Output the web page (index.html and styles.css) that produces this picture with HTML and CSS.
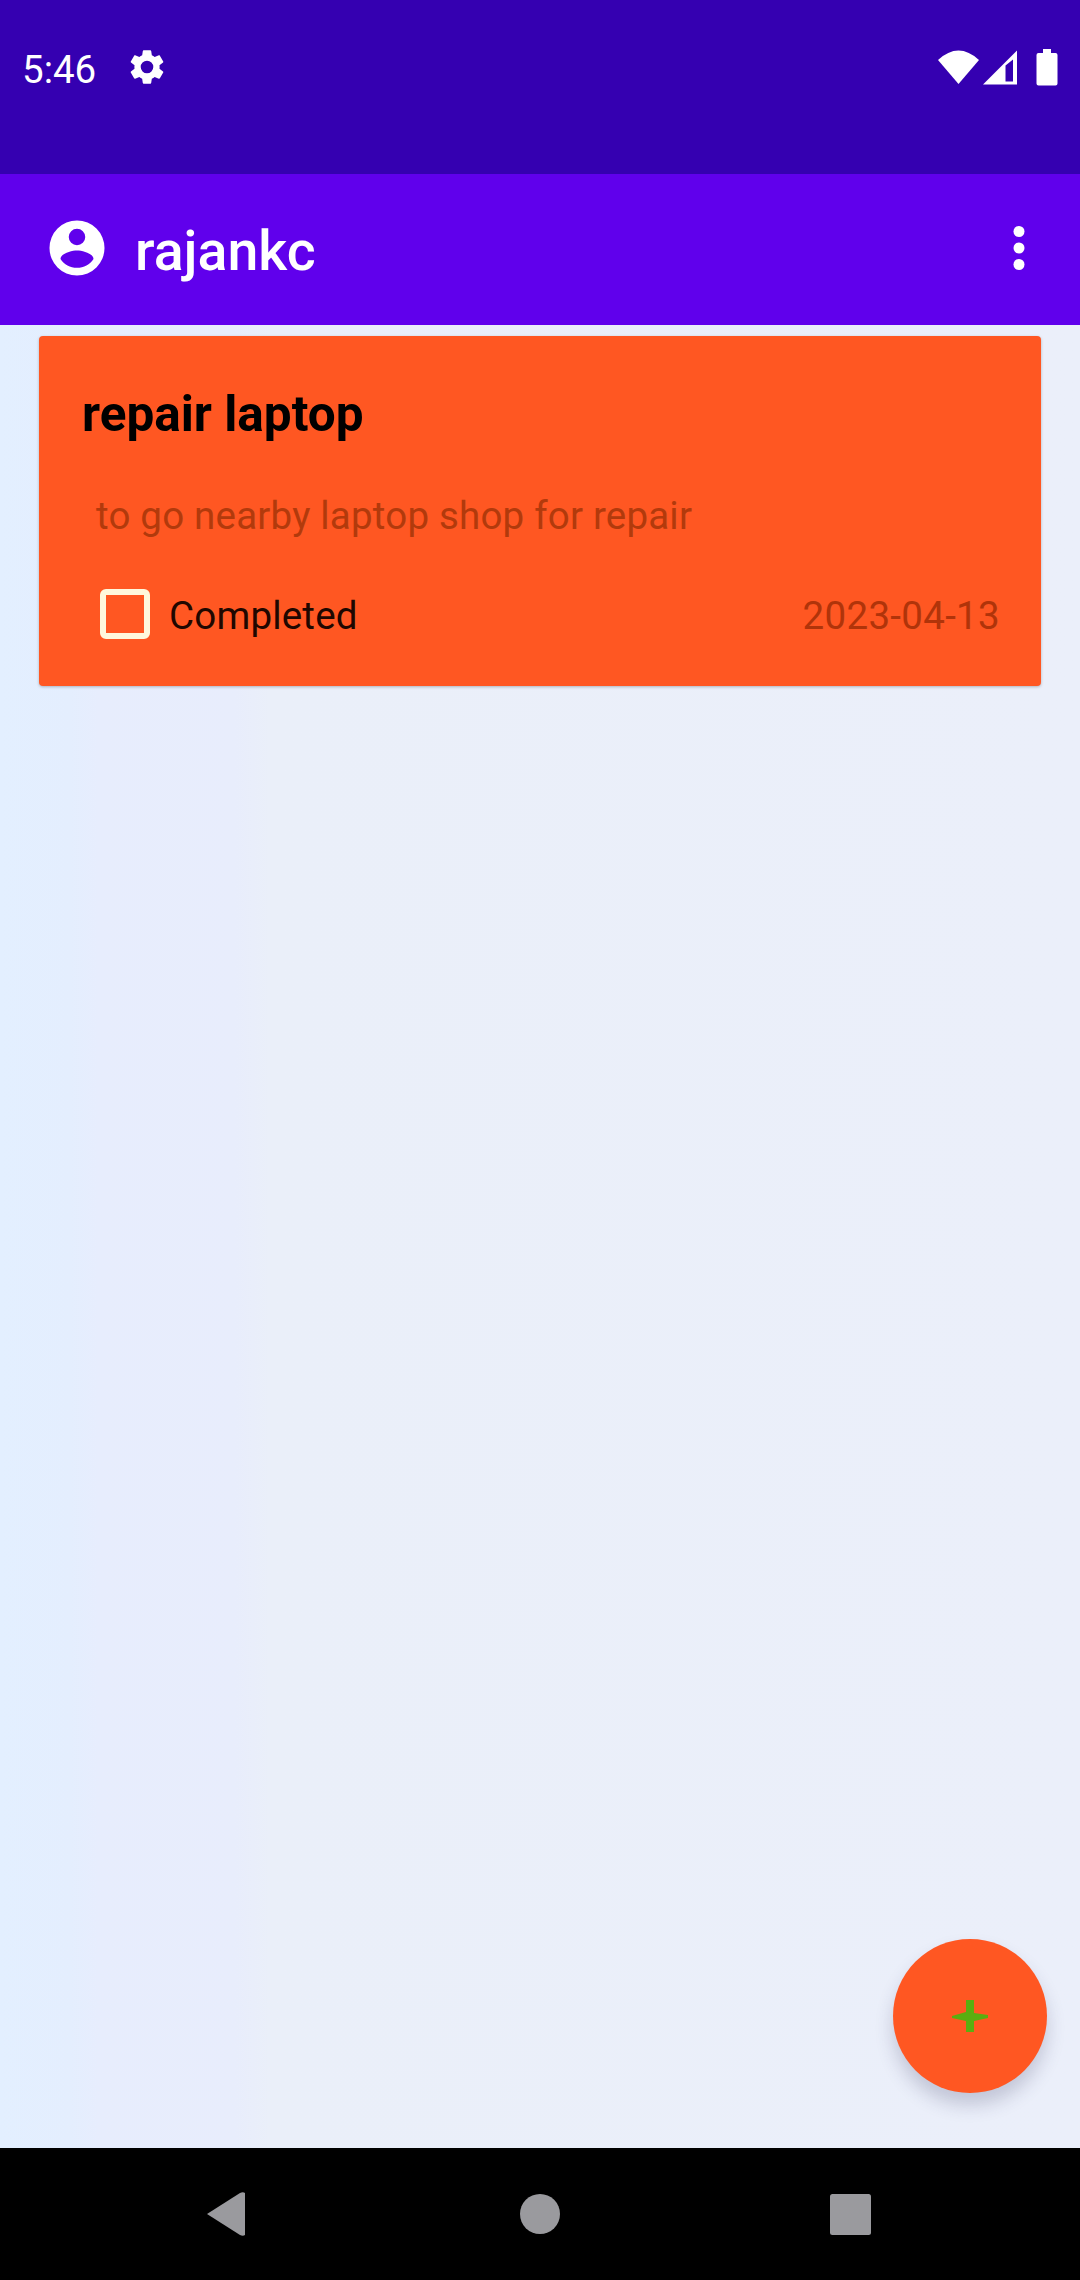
FILE: index.html
```html
<!DOCTYPE html>
<html lang="en">
<head>
<meta charset="utf-8">
<title>Tasks</title>
<link rel="stylesheet" href="styles.css">
</head>
<body>
<div class="screen">
  <header class="status">
    <span class="time">5:46</span>
    <svg class="gear" width="42" height="42" viewBox="0 0 24 24"><path d="M19.14 12.94c.04-.3.06-.61.06-.94 0-.32-.02-.64-.07-.94l2.03-1.58c.18-.14.23-.41.12-.61l-1.92-3.32c-.12-.22-.37-.29-.59-.22l-2.39.96c-.5-.38-1.03-.7-1.62-.94L14.400 2.810c-.04-.24-.24-.41-.48-.41h-3.840c-.24 0-.43.17-.47.41L9.250 5.350c-.59.24-1.130.57-1.620.94l-2.390-.96c-.22-.08-.47 0-.59.22L2.740 8.870c-.12.21-.08.47.12.61l2.030 1.580c-.05.3-.09.63-.09.94s.02.64.07.94l-2.030 1.580c-.18.14-.23.41-.12.61l1.920 3.320c.12.22.37.29.59.22l2.390-.96c.5.38 1.030.7 1.620.94l.36 2.540c.05.24.24.41.48.41h3.840c.24 0 .44-.17.47-.41l.36-2.540c.59-.24 1.130-.56 1.620-.94l2.390.96c.22.08.47 0 .59-.22l1.920-3.320c.12-.22.07-.47-.12-.61l-2.010-1.580zM12 15.600a3.600 3.600 0 1 1 0-7.200 3.600 3.600 0 0 1 0 7.200z"/></svg>
    <div class="signals">
      <svg width="41" height="34" viewBox="0 0 41 34"><path d="M0 10Q20.500-9 41 10L20.500 34z"/></svg>
      <svg width="34" height="35" viewBox="0 0 34 35"><path fill-rule="evenodd" d="M0 34.500L34 .5V34.500zM22.500 15.500V31.500h7.500V9.500z"/></svg>
      <svg class="battery" width="22" height="37" viewBox="0 0 22 37"><path d="M7 0h8v4h4.500q2 0 2 2v28.500q0 2-2 2H2.500q-2 0-2-2V6q0-2 2-2H7z"/></svg>
    </div>
  </header>
  <div class="appbar">
    <svg width="66" height="66" viewBox="0 0 24 24"><path fill-rule="evenodd" d="M12 2a10 10 0 1 0 0 20 10 10 0 0 0 0-20zm0 3a3 3 0 1 1 0 6 3 3 0 0 1 0-6zm0 14.200c-2.500 0-4.710-1.280-6-3.220.03-1.990 4-3.080 6-3.080s5.970 1.090 6 3.080c-1.290 1.940-3.500 3.220-6 3.220z"/></svg>
    <h1 class="user">rajankc</h1>
    <svg class="more" width="66" height="66" viewBox="0 0 24 24"><circle cx="12" cy="6" r="2"/><circle cx="12" cy="12" r="2"/><circle cx="12" cy="18" r="2"/></svg>
  </div>
  <main class="content">
    <article class="card">
      <h2 class="title">repair laptop</h2>
      <p class="desc">to go nearby laptop shop for repair</p>
      <div class="row">
        <span class="box"></span>
        <span class="label">Completed</span>
        <time class="date">2023-04-13</time>
      </div>
    </article>
    <button class="fab" aria-label="Add"><svg width="40" height="34" viewBox="0 0 40 34"><path d="M16 1h8v13l14 2v3l-14 3v11h-8V22L2 19v-2l14-4z"/></svg></button>
  </main>
  <nav class="nav">
    <svg class="back" width="40" height="46" viewBox="0 0 40 46"><path d="M1 23L34 2q3-1.500 5 0v42q-2 1.500-5 0z"/></svg>
    <svg width="40" height="40" viewBox="0 0 40 40"><circle cx="20" cy="20" r="20"/></svg>
    <svg class="recent" width="41" height="41" viewBox="0 0 41 41"><rect width="41" height="41" rx="2.500"/></svg>
  </nav>
</div>
</body>
</html>
```
FILE: styles.css
```css
* { box-sizing: border-box; }
body, h1, h2, p { margin: 0; }
body { font-family: Roboto, "Noto Sans", sans-serif; }
svg { display: block; flex: none; }

.screen {
  width: 1080px;
  height: 2280px;
  display: flex;
  flex-direction: column;
}

.status {
  height: 174px;
  padding: 0 22px 40px 22px;
  display: flex;
  align-items: center;
  background: #3500b1;
  color: #fff;
  fill: #fff;
}
.time { font-size: 38.5px; line-height: 44px; padding-top: 6px; width: 74px; white-space: nowrap; }
.gear { margin-left: 29.5px; }
.signals { margin-left: auto; display: flex; align-items: center; gap: 4px; }
.battery { margin-left: 15px; }

.appbar {
  height: 151px;
  padding: 0 28px 3px 44px;
  display: flex;
  align-items: center;
  background: #6000ec;
  color: #fff;
  fill: #fff;
}
.user { font-size: 55.5px; font-weight: 500; line-height: 64px; margin-left: 25px; padding-top: 8px; }
.more { margin-left: auto; }

.content {
  flex: 1;
  display: flex;
  flex-direction: column;
  justify-content: space-between;
  padding: 11px 39px 55px;
  background: linear-gradient(90deg, #e3efff 0, #e4eefe 70px, #e7edfd 100px, #e8edfc 235px, #eaeff9 270px, #ebeffa 100%);
}
.card {
  height: 350px;
  padding: 48px 41px 0 43px;
  border-radius: 4px;
  background: #ff5722;
  box-shadow: 0 1px 3px rgba(0, 0, 0, .25);
}
.title { font-size: 49.5px; font-weight: 700; line-height: 60px; color: #000; }
.desc { margin: 49px 0 0 14px; font-size: 38.5px; line-height: 46px; letter-spacing: .2px; color: #b23a0c; }
.row { display: flex; align-items: center; margin: 48px 0 0 18px; height: 54px; }
.box { width: 50px; height: 50px; border: 6px solid #fff8dc; border-radius: 6px; }
.label { margin-left: 19px; font-size: 38.5px; line-height: 46px; letter-spacing: .2px; padding-top: 4px; color: #200700; }
.date { margin-left: auto; font-size: 38.5px; line-height: 46px; letter-spacing: .3px; padding-top: 4px; color: #b0340a; }

.fab {
  align-self: flex-end;
  width: 154px;
  height: 154px;
  margin-right: -6px;
  padding: 0;
  border: 0;
  border-radius: 50%;
  display: flex;
  align-items: center;
  justify-content: center;
  background: #ff5722;
  fill: #5aae10;
  box-shadow: 0 12px 18px rgba(50, 50, 90, .22);
}

.nav {
  height: 132px;
  padding: 0 72px;
  display: grid;
  grid-template-columns: repeat(3, 1fr);
  align-items: center;
  justify-items: center;
  background: #000;
  fill: #9a9a9e;
}
.back { margin-right: 5px; }
.recent { margin-right: 3px; }
```
